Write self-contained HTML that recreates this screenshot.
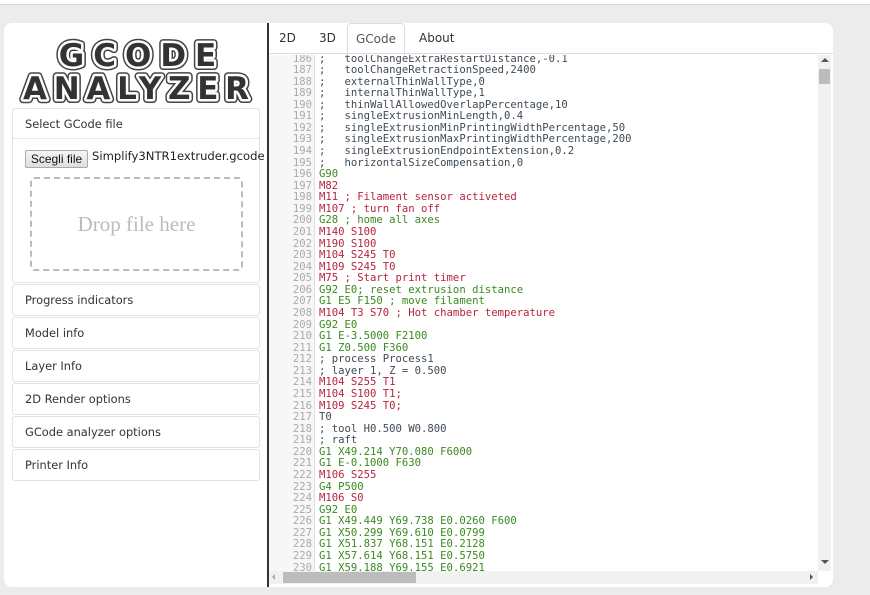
<!DOCTYPE html>
<html><head><meta charset="utf-8"><style>
*{box-sizing:border-box;margin:0;padding:0}
body{width:870px;height:595px;background:#ececec;position:relative;overflow:hidden;font-family:"Liberation Sans","DejaVu Sans",sans-serif}
.top{position:absolute;left:0;top:0;width:870px;height:5px;background:#fff;border-bottom:1px solid #d8d8d8}
.card{position:absolute;left:4px;top:23px;width:829px;height:564px;background:#fff;border-radius:8px;overflow:hidden}
.vline{position:absolute;left:263px;top:0;width:2px;height:564px;background:#333}
.panel{position:absolute;left:8px;width:248px;border:1px solid #e3e3e3;border-radius:3px;background:#fff;font-family:"DejaVu Sans",sans-serif;font-size:11.4px;color:#333}
.panel .h{height:30px;line-height:30px;padding-left:12px}
.tabs{position:absolute;left:265px;top:0;width:564px;height:31px;border-bottom:1px solid #ddd;font-family:"DejaVu Sans",sans-serif;font-size:12px;color:#333}
.tab{position:absolute;top:0;height:31px;line-height:31px}
.code{position:absolute;left:265px;top:32px;width:549px;height:516px;overflow:hidden;font-family:"DejaVu Sans Mono",monospace;font-size:10.6px;line-height:11.57px}
.gut{position:absolute;left:0;top:0;width:46px;height:516px;background:#f7f7f7;border-right:1px solid #ddd}
.ln{position:absolute;left:0;width:43px;text-align:right;color:#aaa}
.tx{position:absolute;left:50px;white-space:pre}
.g{color:#3a8a1e}.m{color:#b8233e}.c{color:#3f4a55}
</style></head><body>
<div class="top"></div>
<div class="card">
<svg style="position:absolute;left:10px;top:10px" width="245" height="72">
<g font-family="DejaVu Sans" font-weight="bold" text-anchor="middle" stroke-linejoin="round">
<text x="128" y="33" font-size="31" letter-spacing="9" fill="#fff" stroke="#444" stroke-width="8">GCODE</text>
<text x="128" y="33" font-size="31" letter-spacing="9" fill="#fff" stroke="#fff" stroke-width="5">GCODE</text>
<text x="128" y="33" font-size="31" letter-spacing="9" fill="#333">GCODE</text>
<text x="125" y="66" font-size="31" letter-spacing="6" fill="#fff" stroke="#444" stroke-width="8" textLength="232">ANALYZER</text>
<text x="125" y="66" font-size="31" letter-spacing="6" fill="#fff" stroke="#fff" stroke-width="5" textLength="232">ANALYZER</text>
<text x="125" y="66" font-size="31" letter-spacing="6" fill="#333" textLength="232">ANALYZER</text>
</g></svg>
<div class="panel" style="top:85px;height:175px">
<div class="h" style="border-bottom:1px solid #e8e8e8">Select GCode file</div>
<div style="position:absolute;left:12px;top:41px;width:63px;height:18px;border:1px solid #aaa;border-radius:2px;background:linear-gradient(#f6f6f6,#ddd);font-family:'Liberation Sans';font-size:12px;line-height:16px;text-align:center;color:#111">Scegli file</div>
<div style="position:absolute;left:79px;top:40px;font-size:11.6px;color:#222;white-space:nowrap">Simplify3NTR1extruder.gcode</div>
<div style="position:absolute;left:17px;top:68px;width:213px;height:94px;border:2px dashed #bbb;border-radius:4px;font-family:'Liberation Serif',serif;font-size:21px;color:#bbb;text-align:center;line-height:90px">Drop file here</div>
</div>
<div class="panel" style="top:261px"><div class="h">Progress indicators</div></div>
<div class="panel" style="top:294px"><div class="h">Model info</div></div>
<div class="panel" style="top:327px"><div class="h">Layer Info</div></div>
<div class="panel" style="top:360px"><div class="h">2D Render options</div></div>
<div class="panel" style="top:393px"><div class="h">GCode analyzer options</div></div>
<div class="panel" style="top:426px"><div class="h">Printer Info</div></div>
<div class="vline"></div>
<div class="tabs">
<div class="tab" style="left:10px">2D</div>
<div class="tab" style="left:50px">3D</div>
<div class="tab" style="left:78px;width:58px;border:1px solid #ddd;border-bottom:1px solid #fff;border-radius:4px 4px 0 0;text-align:center;height:32px;color:#555">GCode</div>
<div class="tab" style="left:150px">About</div>
</div>
<div class="code"><div class="gut"></div>
<div id="L"></div>
</div>
<div style="position:absolute;left:814px;top:32px;width:13px;height:516px;background:#f1f1f1"></div>
<div style="position:absolute;left:815px;top:46px;width:11px;height:15px;background:#bcbcbc"></div>
<div style="position:absolute;left:817px;top:35px;width:0;height:0;border-left:4px solid transparent;border-right:4px solid transparent;border-bottom:4px solid #555"></div>
<div style="position:absolute;left:817px;top:537px;width:0;height:0;border-left:4px solid transparent;border-right:4px solid transparent;border-top:4px solid #555"></div>
<div style="position:absolute;left:265px;top:548px;width:549px;height:13px;background:#f1f1f1"></div>
<div style="position:absolute;left:279px;top:549px;width:133px;height:11px;background:#bcbcbc"></div>
<div style="position:absolute;left:806px;top:551px;border-top:3px solid transparent;border-bottom:3px solid transparent;border-left:3px solid #555"></div>
<div style="position:absolute;left:268px;top:551px;border-top:3px solid transparent;border-bottom:3px solid transparent;border-right:3px solid #aaa"></div>
</div>
<script>
var d=[
"c;   toolChangeExtraRestartDistance,-0.1",
"c;   toolChangeRetractionSpeed,2400",
"c;   externalThinWallType,0",
"c;   internalThinWallType,1",
"c;   thinWallAllowedOverlapPercentage,10",
"c;   singleExtrusionMinLength,0.4",
"c;   singleExtrusionMinPrintingWidthPercentage,50",
"c;   singleExtrusionMaxPrintingWidthPercentage,200",
"c;   singleExtrusionEndpointExtension,0.2",
"c;   horizontalSizeCompensation,0",
"gG90","mM82","mM11 ; Filament sensor activeted","mM107 ; turn fan off","gG28 ; home all axes",
"mM140 S100","mM190 S100","mM104 S245 T0","mM109 S245 T0","mM75 ; Start print timer",
"gG92 E0; reset extrusion distance","gG1 E5 F150 ; move filament","mM104 T3 S70 ; Hot chamber temperature",
"gG92 E0","gG1 E-3.5000 F2100","gG1 Z0.500 F360","c; process Process1","c; layer 1, Z = 0.500",
"mM104 S255 T1","mM104 S100 T1;","mM109 S245 T0;","cT0","c; tool H0.500 W0.800","c; raft",
"gG1 X49.214 Y70.080 F6000","gG1 E-0.1000 F630","mM106 S255","gG4 P500","mM106 S0","gG92 E0",
"gG1 X49.449 Y69.738 E0.0260 F600","gG1 X50.299 Y69.610 E0.0799","gG1 X51.837 Y68.151 E0.2128",
"gG1 X57.614 Y68.151 E0.5750","gG1 X59.188 Y69.155 E0.6921"];
var h="";for(var i=0;i<d.length;i++){var t=-1.5+i*11.57;
h+='<div class="ln" style="top:'+t+'px">'+(186+i)+'</div><div class="tx '+d[i][0]+'" style="top:'+t+'px">'+d[i].slice(1)+'</div>';}
document.getElementById("L").innerHTML=h;
</script>
</body></html>
